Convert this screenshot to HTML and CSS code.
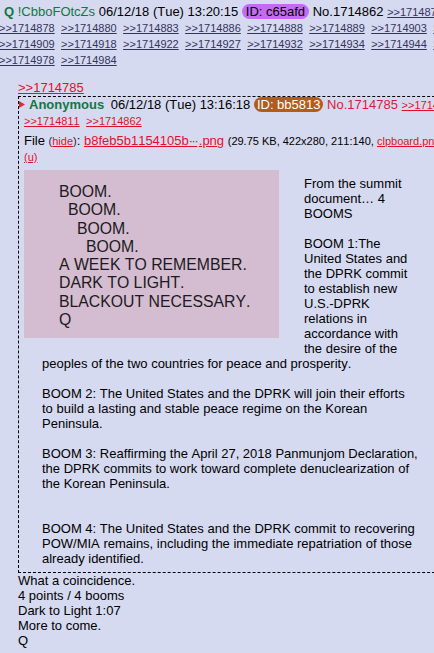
FILE: index.html
```html
<!DOCTYPE html>
<html lang="en">
<head>
<meta charset="utf-8">
<title>Thread 1714862</title>
<link rel="stylesheet" href="styles.css">
</head>
<body>
<div class="thread">
  <div class="op-info">
    <span class="name-block"><span class="name">Q</span> <span class="trip">!CbboFOtcZs</span></span>
    <span class="date">06/12/18 (Tue) 13:20:15</span>
    <span class="id id-q">ID: c65afd</span>
    <span class="post-no">No.1714862</span>
    <span class="backlinks"><a class="blue-link">&gt;&gt;1714873</a> <a class="blue-link">&gt;&gt;1714878</a> <a class="blue-link">&gt;&gt;1714880</a> <a class="blue-link">&gt;&gt;1714883</a> <a class="blue-link">&gt;&gt;1714886</a> <a class="blue-link">&gt;&gt;1714888</a> <a class="blue-link">&gt;&gt;1714889</a> <a class="blue-link">&gt;&gt;1714903</a> <a class="blue-link">&gt;&gt;1714905</a> <a class="blue-link">&gt;&gt;1714909</a> <a class="blue-link">&gt;&gt;1714918</a> <a class="blue-link">&gt;&gt;1714922</a> <a class="blue-link">&gt;&gt;1714927</a> <a class="blue-link">&gt;&gt;1714932</a> <a class="blue-link">&gt;&gt;1714934</a> <a class="blue-link">&gt;&gt;1714944</a> <a class="blue-link">&gt;&gt;1714951</a> <a class="blue-link">&gt;&gt;1714978</a> <a class="blue-link">&gt;&gt;1714984</a></span>
  </div>

  <blockquote class="message">
    <div><a class="red-link">&gt;&gt;1714785</a></div>
    <div class="inline-post">
      <div class="inline-info"><svg class="marker" width="6" height="7" viewBox="0 0 6 7"><path d="M0 0L6 3.5L0 7Z" fill="#e0283c"/></svg><span class="name">Anonymous</span> <span class="date date-inline">06/12/18 (Tue) 13:16:18</span> <span class="id id-anon">ID: bb5813</span> <span class="post-no no-red">No.1714785</span> <span class="backlinks"><a class="red-link">&gt;&gt;1714802</a></span></div>
      <div class="inline-backlinks"><span class="backlinks"><a class="red-link">&gt;&gt;1714811</a> <a class="red-link">&gt;&gt;1714862</a></span></div>
      <div class="file">
        <div class="file-text">File <span class="small hide">(<a class="red-link">hide</a>)</span>: <a class="red-link">b8feb5b1154105b<span class="ellip">···</span>.png</a> <span class="small">(29.75 KB, 422x280, 211:140, <a class="red-link">clpboard.png</a>)</span></div>
        <div class="file-u"><a class="red-link small">(u)</a></div>
        <a class="thumb">
          <span class="thumb-line">BOOM.</span>
          <span class="thumb-line indent-1">BOOM.</span>
          <span class="thumb-line indent-2">BOOM.</span>
          <span class="thumb-line indent-3">BOOM.</span>
          <span class="thumb-line">A WEEK TO REMEMBER.</span>
          <span class="thumb-line">DARK TO LIGHT.</span>
          <span class="thumb-line">BLACKOUT NECESSARY.</span>
          <span class="thumb-line">Q</span>
        </a>
      </div>
      <blockquote class="post-text">From the summit<br>document… 4<br>BOOMS<br><br>BOOM 1:The<br>United States and<br>the DPRK commit<br>to establish new<br>U.S.-DPRK<br>relations in<br>accordance with<br>the desire of the<br>peoples of the two countries for peace and prosperity.<br><br>BOOM 2: The United States and the DPRK will join their efforts<br>to build a lasting and stable peace regime on the Korean<br>Peninsula.<br><br>BOOM 3: Reaffirming the April 27, 2018 Panmunjom Declaration,<br>the DPRK commits to work toward complete denuclearization of<br>the Korean Peninsula.<br><br><br>BOOM 4: The United States and the DPRK commit to recovering<br>POW/MIA remains, including the immediate repatriation of those<br>already identified.</blockquote>
    </div>
    <div class="closing">What a coincidence.<br>4 points / 4 booms<br>Dark to Light 1:07<br>More to come.<br>Q</div>
  </blockquote>
</div>
</body>
</html>
```

FILE: styles.css
```css
html, body {
  margin: 0;
  padding: 0;
  overflow: hidden;
  background: #d6daf0;
}

body {
  font-family: "Liberation Sans", Arial, sans-serif;
  font-size: 13px;
  color: #000;
  font-kerning: none;
  font-variant-ligatures: none;
}

a {
  text-decoration: underline;
  cursor: pointer;
}

.thread {
  padding-top: 4px;
  width: 600px;
}

.op-info {
  margin-left: -1px;
  width: 497px;
  line-height: 16px;
}

.name-block {
  margin-left: 5px;
}

.name {
  color: #117743;
  font-weight: bold;
}

.trip {
  color: #117743;
}

.id {
  border-radius: 8px;
  padding: 0 4px;
}

.id-q {
  background: #c36cf0;
  color: #000;
}

.id-anon {
  background: #b45c1c;
  color: #fff;
  padding: 0 3px;
}

.backlinks {
  font-size: 11px;
}

.backlinks a {
  margin-right: 3.3px;
}

.blue-link {
  color: #34345c;
}

.red-link {
  color: #e0102c;
}

.no-red {
  color: #e01838;
}

.message {
  margin: 12px 0 0 18px;
  line-height: 15px;
}

.inline-post {
  margin-top: 1px;
  border: 1px dashed #000;
  width: 470px;
  display: flow-root;
}

.inline-info {
  white-space: nowrap;
}

.marker {
  vertical-align: 1px;
  margin-right: 4px;
}

.date-inline {
  margin-left: 3px;
}

.inline-backlinks {
  margin-left: 5px;
}

.file {
  margin: 4px 0 0 5px;
}

.file-text {
  white-space: nowrap;
}

.ellip {
  letter-spacing: -1.5px;
  margin-right: 1.5px;
}

.small {
  font-size: 11px;
}

.hide {
  color: #1c1c5c;
}

.thumb {
  float: left;
  display: block;
  box-sizing: border-box;
  width: 255px;
  height: 168px;
  margin: 5px 25px 5px 0;
  padding: 13px 0 0 35px;
  background: #d4bdd1;
  color: #1c1a20;
  text-decoration: none;
  font-size: 15.8px;
  line-height: 18.3px;
}

.thumb-line {
  display: block;
  white-space: nowrap;
}

.indent-1 { padding-left: 9px; }
.indent-2 { padding-left: 18px; }
.indent-3 { padding-left: 27px; }

.post-text {
  margin: 11px 0 6px 23px;
  white-space: nowrap;
}
```
